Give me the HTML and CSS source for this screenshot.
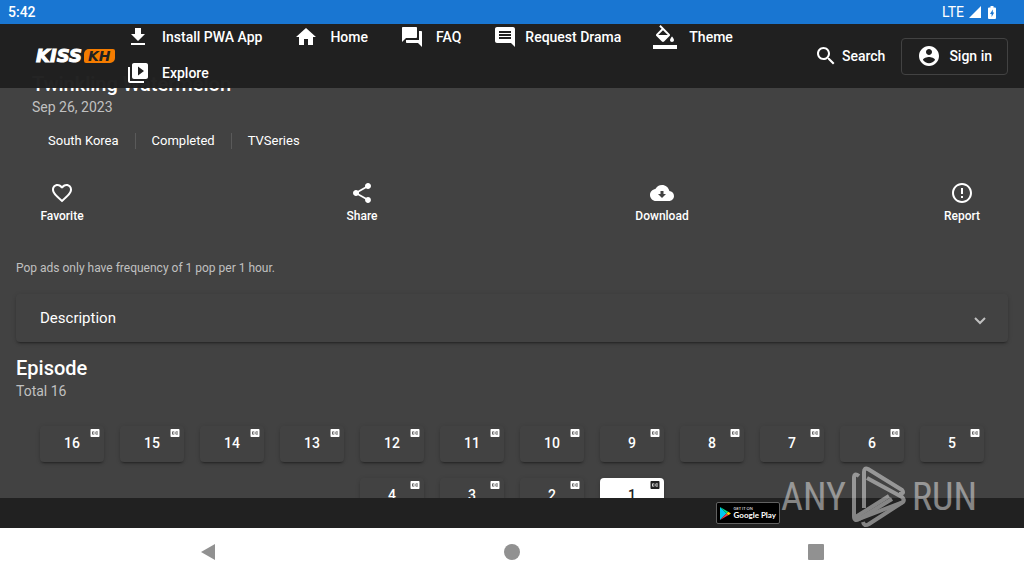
FILE: index.html
```
<!doctype html>
<html lang="en">
<head>
<meta charset="utf-8">
<title>Twinkling Watermelon - KissKH</title>
<link rel="stylesheet" href="styles.css">
</head>
<body>

<div class="status-bar">
	<span class="clock">5:42</span>
	<span class="network">LTE</span>
	<svg class="signal" viewBox="0 0 12 12"><path d="M12 0v12H0z"/></svg>
	<svg class="battery" viewBox="0 0 8 13"><path d="M2.500 0h3v1.500H7a1 1 0 0 1 1 1V12a1 1 0 0 1-1 1H1a1 1 0 0 1-1-1V2.500a1 1 0 0 1 1-1h1.500zM4.800 3.500L2 8h1.600v3L6.200 6.600H4.800z" fill-rule="evenodd"/></svg>
</div>

<div class="viewport">
	<header class="toolbar">
		<a class="logo" href="#"><span class="logo-kiss">KISS</span><span class="logo-kh">KH</span></a>
		<nav class="menu">
			<a class="menu-link" href="#"><svg class="icon" viewBox="0 0 24 24"><path d="M19 9h-4V3H9v6H5l7 7 7-7zM5 18v2h14v-2H5z"/></svg>Install PWA App</a>
			<a class="menu-link" href="#"><svg class="icon" viewBox="0 0 24 24"><path d="M10 20v-6h4v6h5v-8h3L12 3 2 12h3v8z"/></svg>Home</a>
			<a class="menu-link" href="#"><svg class="icon" viewBox="0 0 24 24"><path d="M21 6h-2v9H6v2c0 .55.45 1 1 1h11l4 4V7c0-.55-.45-1-1-1zm-4 6V3c0-.55-.45-1-1-1H3c-.55 0-1 .45-1 1v14l4-4h10c.55 0 1-.45 1-1z"/></svg>FAQ</a>
			<a class="menu-link compact" href="#"><svg class="icon" viewBox="0 0 24 24"><path d="M21.990 4c0-1.100-.89-2-1.990-2H4c-1.100 0-2 .9-2 2v12c0 1.100.9 2 2 2h14l4 4-.01-18zM18 14H6v-2h12v2zm0-3H6V9h12v2zm0-3H6V6h12v2z"/></svg>Request Drama</a>
			<a class="menu-link" href="#"><svg class="icon" viewBox="0 0 24 24"><path d="M16.560 8.940L7.620 0 6.210 1.410l2.380 2.380-5.150 5.150c-.59.59-.59 1.540 0 2.120l5.500 5.500c.29.29.68.44 1.060.44s.77-.15 1.060-.44l5.500-5.500c.59-.58.59-1.530 0-2.120zM5.210 10L10 5.210 14.790 10H5.210zM19 11.500s-2 2.170-2 3.500c0 1.100.9 2 2 2s2-.9 2-2c0-1.330-2-3.500-2-3.500zM0 20h24v4H0z"/></svg>Theme</a>
			<a class="menu-link" href="#"><svg class="icon" viewBox="0 0 24 24"><path d="M4 6H2v14c0 1.100.9 2 2 2h14v-2H4V6zm16-4H8c-1.100 0-2 .9-2 2v12c0 1.100.9 2 2 2h12c1.100 0 2-.9 2-2V4c0-1.100-.9-2-2-2zm-8 12.500v-9l6 4.500-6 4.500z"/></svg>Explore</a>
		</nav>
		<button class="search"><svg class="icon" viewBox="0 0 24 24"><path d="M15.500 14h-.79l-.28-.27C15.410 12.590 16 11.110 16 9.500 16 5.910 13.090 3 9.500 3S3 5.910 3 9.500 5.910 16 9.500 16c1.610 0 3.090-.59 4.230-1.570l.27.28v.79l5 4.990L20.490 19l-4.990-5zm-6 0C7.010 14 5 11.990 5 9.500S7.010 5 9.500 5 14 7.010 14 9.500 11.990 14 9.500 14z"/></svg>Search</button>
		<button class="sign-in"><svg class="icon" viewBox="0 0 24 24"><path d="M12 2C6.480 2 2 6.480 2 12s4.480 10 10 10 10-4.480 10-10S17.520 2 12 2zm0 3c1.660 0 3 1.340 3 3s-1.340 3-3 3-3-1.340-3-3 1.340-3 3-3zm0 14.200c-2.500 0-4.710-1.280-6-3.220.03-1.990 4-3.080 6-3.080 1.990 0 5.970 1.090 6 3.080-1.290 1.940-3.500 3.220-6 3.220z"/></svg>Sign in</button>
	</header>

	<main class="page">
		<section class="drama">
			<h1 class="title">Twinkling Watermelon</h1>
			<div class="subtitle">Sep 26, 2023</div>
			<ul class="tags">
				<li>South Korea</li>
				<li>Completed</li>
				<li>TVSeries</li>
			</ul>
			<div class="actions">
				<button class="action"><svg class="icon" viewBox="0 0 24 24"><path d="M16.500 3c-1.740 0-3.410.81-4.500 2.090C10.910 3.810 9.240 3 7.500 3 4.420 3 2 5.420 2 8.500c0 3.780 3.400 6.860 8.550 11.540L12 21.350l1.450-1.320C18.600 15.360 22 12.280 22 8.500 22 5.420 19.580 3 16.500 3zm-4.400 15.550l-.1.100-.1-.1C7.140 14.240 4 11.390 4 8.500 4 6.500 5.500 5 7.500 5c1.540 0 3.040.99 3.570 2.360h1.870C13.460 5.990 14.960 5 16.500 5c2 0 3.500 1.500 3.500 3.500 0 2.890-3.140 5.740-7.900 10.050z"/></svg>Favorite</button>
				<button class="action"><svg class="icon" viewBox="0 0 24 24"><path d="M18 16.080c-.76 0-1.440.3-1.960.77L8.910 12.700c.05-.23.09-.46.09-.7s-.04-.47-.09-.7l7.050-4.110c.54.5 1.250.81 2.040.81 1.660 0 3-1.340 3-3s-1.340-3-3-3-3 1.340-3 3c0 .24.04.47.09.7L8.040 9.810C7.500 9.310 6.790 9 6 9c-1.660 0-3 1.340-3 3s1.340 3 3 3c.79 0 1.500-.31 2.040-.81l7.120 4.160c-.05.21-.08.43-.08.65 0 1.610 1.310 2.920 2.920 2.920s2.920-1.310 2.920-2.920-1.310-2.920-2.920-2.920z"/></svg>Share</button>
				<button class="action"><svg class="icon" viewBox="0 0 24 24"><path d="M19.350 10.040C18.670 6.590 15.640 4 12 4 9.110 4 6.600 5.640 5.350 8.040 2.340 8.360 0 10.910 0 14c0 3.310 2.690 6 6 6h13c2.760 0 5-2.240 5-5 0-2.640-2.050-4.780-4.650-4.960zM16 13l-4 4-4-4h2.500v-3h3v3z"/></svg>Download</button>
				<button class="action"><svg class="icon" viewBox="0 0 24 24"><path d="M11 15h2v2h-2zm0-8h2v6h-2zm.99-5C6.470 2 2 6.480 2 12s4.470 10 9.990 10C17.520 22 22 17.520 22 12S17.520 2 11.990 2zM12 20c-4.420 0-8-3.580-8-8s3.580-8 8-8 8 3.580 8 8-3.580 8-8 8z"/></svg>Report</button>
			</div>
		</section>

		<p class="notice">Pop ads only have frequency of 1 pop per 1 hour.</p>

		<details class="panel">
			<summary>Description
				<svg class="chevron" viewBox="0 0 12 12"><path d="M1 3l5 5 5-5"/></svg>
			</summary>
		</details>

		<h2 class="title">Episode</h2>
		<div class="subtitle">Total 16</div>

		<svg class="symbols">
			<symbol id="cc" viewBox="0 0 24 24"><path d="M19 4H5c-1.110 0-2 .9-2 2v12c0 1.100.89 2 2 2h14c1.100 0 2-.9 2-2V6c0-1.100-.9-2-2-2zm-8 7H9.500v-.5h-2v3h2V13H11v1c0 .55-.45 1-1 1H7c-.55 0-1-.45-1-1v-4c0-.55.45-1 1-1h3c.55 0 1 .45 1 1v1zm7 0h-1.500v-.5h-2v3h2V13H18v1c0 .55-.45 1-1 1h-3c-.55 0-1-.45-1-1v-4c0-.55.45-1 1-1h3c.55 0 1 .45 1 1v1z"/></symbol>
		</svg>
		<div class="episodes">
			<button class="episode">16<svg class="cc"><use href="#cc"/></svg></button>
			<button class="episode">15<svg class="cc"><use href="#cc"/></svg></button>
			<button class="episode">14<svg class="cc"><use href="#cc"/></svg></button>
			<button class="episode">13<svg class="cc"><use href="#cc"/></svg></button>
			<button class="episode">12<svg class="cc"><use href="#cc"/></svg></button>
			<button class="episode">11<svg class="cc"><use href="#cc"/></svg></button>
			<button class="episode">10<svg class="cc"><use href="#cc"/></svg></button>
			<button class="episode">9<svg class="cc"><use href="#cc"/></svg></button>
			<button class="episode">8<svg class="cc"><use href="#cc"/></svg></button>
			<button class="episode">7<svg class="cc"><use href="#cc"/></svg></button>
			<button class="episode">6<svg class="cc"><use href="#cc"/></svg></button>
			<button class="episode">5<svg class="cc"><use href="#cc"/></svg></button>
			<button class="episode">4<svg class="cc"><use href="#cc"/></svg></button>
			<button class="episode">3<svg class="cc"><use href="#cc"/></svg></button>
			<button class="episode">2<svg class="cc"><use href="#cc"/></svg></button>
			<button class="episode current">1<svg class="cc"><use href="#cc"/></svg></button>
		</div>
	</main>
</div>

<footer class="store-bar">
	<a class="play-badge" href="#">
		<svg class="play-logo" viewBox="0 0 12 14">
			<path d="M0 0v14l7-7z" fill="#00c8f0"/>
			<path d="M0 0l9 5-2 2z" fill="#00e08a"/>
			<path d="M0 14l9-5-2-2z" fill="#f03a48"/>
			<path d="M9 5l3 2-3 2-2-2z" fill="#ffd000"/>
		</svg>
		<span class="play-text"><small>GET IT ON</small>Google Play</span>
	</a>
</footer>

<div class="system-nav">
	<button aria-label="Back"><svg viewBox="0 0 16 18"><path d="M15 1v16L1 9z"/></svg></button>
	<button aria-label="Home"><svg viewBox="0 0 16 18"><circle cx="8" cy="9" r="8"/></svg></button>
	<button aria-label="Recent apps"><svg viewBox="0 0 16 18"><rect y="1" width="16" height="16" rx="1"/></svg></button>
</div>

<div class="watermark">
	<span>ANY</span>
	<svg viewBox="0 0 56 62">
		<path d="M8 10Q3 6 3 12V50Q3 56 8 53L52 36Q54 34 51 31L16 12M3 52L38 30"/>
		<path d="M13 42V6Q13 1 17 3L51 24Q54 28 48 28M12 56Q13 61 18 58L52 36M8 53L41 33"/>
	</svg>
	<span>RUN</span>
</div>

</body>
</html>
```
FILE: styles.css
```
* { box-sizing: border-box; }
body {
	margin: 0;
	height: 100vh;
	display: flex;
	flex-direction: column;
	position: relative;
	overflow: hidden;
	background-color: #424242;
	color: #fff;
	font: 14px/20px Roboto, sans-serif;
}
button {
	border: 0;
	padding: 0;
	background: none;
	color: inherit;
	font: inherit;
}
a { color: inherit; text-decoration: none; }
svg { fill: currentColor; flex: none; }
.icon { width: 24px; height: 24px; }

.status-bar {
	display: flex;
	align-items: center;
	gap: 5px;
	height: 24px;
	flex: none;
	padding: 0 28px 0 8px;
	background-color: #1976d2;
}
.clock { margin-right: auto; font-weight: 500; }
.signal { width: 12px; height: 12px; }
.battery { width: 8px; height: 13px; margin-left: 2px; }

.viewport {
	display: grid;
	flex: 1;
	min-height: 0;
	overflow: hidden;
}
.toolbar, .page { grid-area: 1 / 1; min-width: 0; }
.toolbar {
	align-self: start;
	z-index: 1;
	display: flex;
	align-items: center;
	height: 64px;
	padding: 0 16px 0 36px;
	background-color: rgba(32, 32, 32, 0.98);
	font-weight: 500;
}
.logo {
	display: flex;
	align-items: center;
	width: 74px;
	font: italic bold 18px/14px "DejaVu Sans", sans-serif;
}
.logo-kiss { -webkit-text-stroke: 1px #fff; }
.logo-kh {
	margin-left: 2px;
	padding: 0 4px;
	border-radius: 5px 2px;
	background-color: #f57c00;
	color: #212121;
	font-size: 14px;
}
.menu {
	display: flex;
	flex-wrap: wrap;
	flex: 1;
	min-width: 0;
	padding-bottom: 2px;
}
.menu-link {
	display: flex;
	align-items: center;
	gap: 12px;
	height: 36px;
	padding: 0 16px;
}
.menu-link.compact { gap: 8px; }
.search, .sign-in { display: flex; align-items: center; }
.search { gap: 4px; padding-right: 16px; }
.sign-in {
	gap: 8px;
	height: 37px;
	padding: 0 15px;
	border: 1px solid #424242;
	border-radius: 4px;
}

.page { padding: 48px 16px 0; }
.drama { padding: 0 16px; }
.title { margin: 0; font-size: 20px; line-height: 24px; font-weight: 500; }
.subtitle { line-height: 22px; color: #c0c0c0; }
.tags {
	display: flex;
	margin: 15px 0 32px;
	padding: 0;
	list-style: none;
	font-size: 13px;
	line-height: 16px;
}
.tags li { padding: 0 16px; }
.tags li + li { border-left: 1px solid #5a5a5a; }
.actions { display: flex; justify-content: space-between; }
.action {
	display: flex;
	flex-direction: column;
	align-items: center;
	gap: 4px;
	width: 60px;
	font-size: 12px;
	line-height: 14px;
	font-weight: 500;
}
.notice {
	margin: 37px 0 18px;
	font-size: 12px;
	line-height: 16px;
	color: #c0c0c0;
}
.panel, .episode {
	border-radius: 4px;
	box-shadow: 0 3px 1px -2px rgba(0, 0, 0, 0.2), 0 2px 2px rgba(0, 0, 0, 0.14), 0 1px 5px rgba(0, 0, 0, 0.12);
}
.panel { margin-bottom: 14px; font-size: 15px; }
.panel summary {
	display: flex;
	align-items: center;
	justify-content: space-between;
	height: 48px;
	padding: 0 22px 0 24px;
}
.chevron {
	width: 12px;
	height: 12px;
	margin-top: 6px;
	fill: none;
	stroke: #c0c0c0;
	stroke-width: 2;
}
.symbols { display: none; }
.episodes {
	display: flex;
	flex-wrap: wrap;
	justify-content: center;
	gap: 16px;
	padding-top: 24px;
}
.episode {
	position: relative;
	width: 64px;
	height: 36px;
	padding-bottom: 2px;
	font-weight: 500;
}
.episode.current { background-color: #fff; color: #212121; }
.cc {
	position: absolute;
	top: 1px;
	right: 3px;
	width: 12px;
	height: 12px;
}

.store-bar {
	display: flex;
	align-items: center;
	justify-content: flex-end;
	flex: none;
	height: 30px;
	padding-right: 244px;
	background-color: #212121;
}
.play-badge {
	display: flex;
	align-items: center;
	gap: 3px;
	height: 22px;
	padding: 0 3px;
	border: 1px solid #616161;
	border-radius: 2px;
	background-color: #000;
	font: bold 8px/9px Lato, sans-serif;
}
.play-logo { width: 11px; height: 13px; }
.play-text small { display: block; font-size: 4px; line-height: 5px; font-weight: 400; }

.system-nav {
	display: flex;
	flex: none;
	height: 48px;
	padding: 0 56px;
	background-color: #fff;
	color: #919191;
}
.system-nav button { flex: 1; }
.system-nav svg { display: block; width: 16px; height: 18px; margin: 0 auto; }

.watermark {
	position: absolute;
	right: 47px;
	bottom: 48px;
	display: flex;
	align-items: center;
	gap: 5px;
	color: #fff;
	opacity: 0.45;
	font: 38px/62px "Liberation Sans Narrow", "Roboto Condensed", Roboto, sans-serif;
	pointer-events: none;
}
.watermark svg {
	width: 56px;
	height: 62px;
	fill: none;
	stroke: currentColor;
	stroke-width: 4;
	stroke-linejoin: round;
}
```
